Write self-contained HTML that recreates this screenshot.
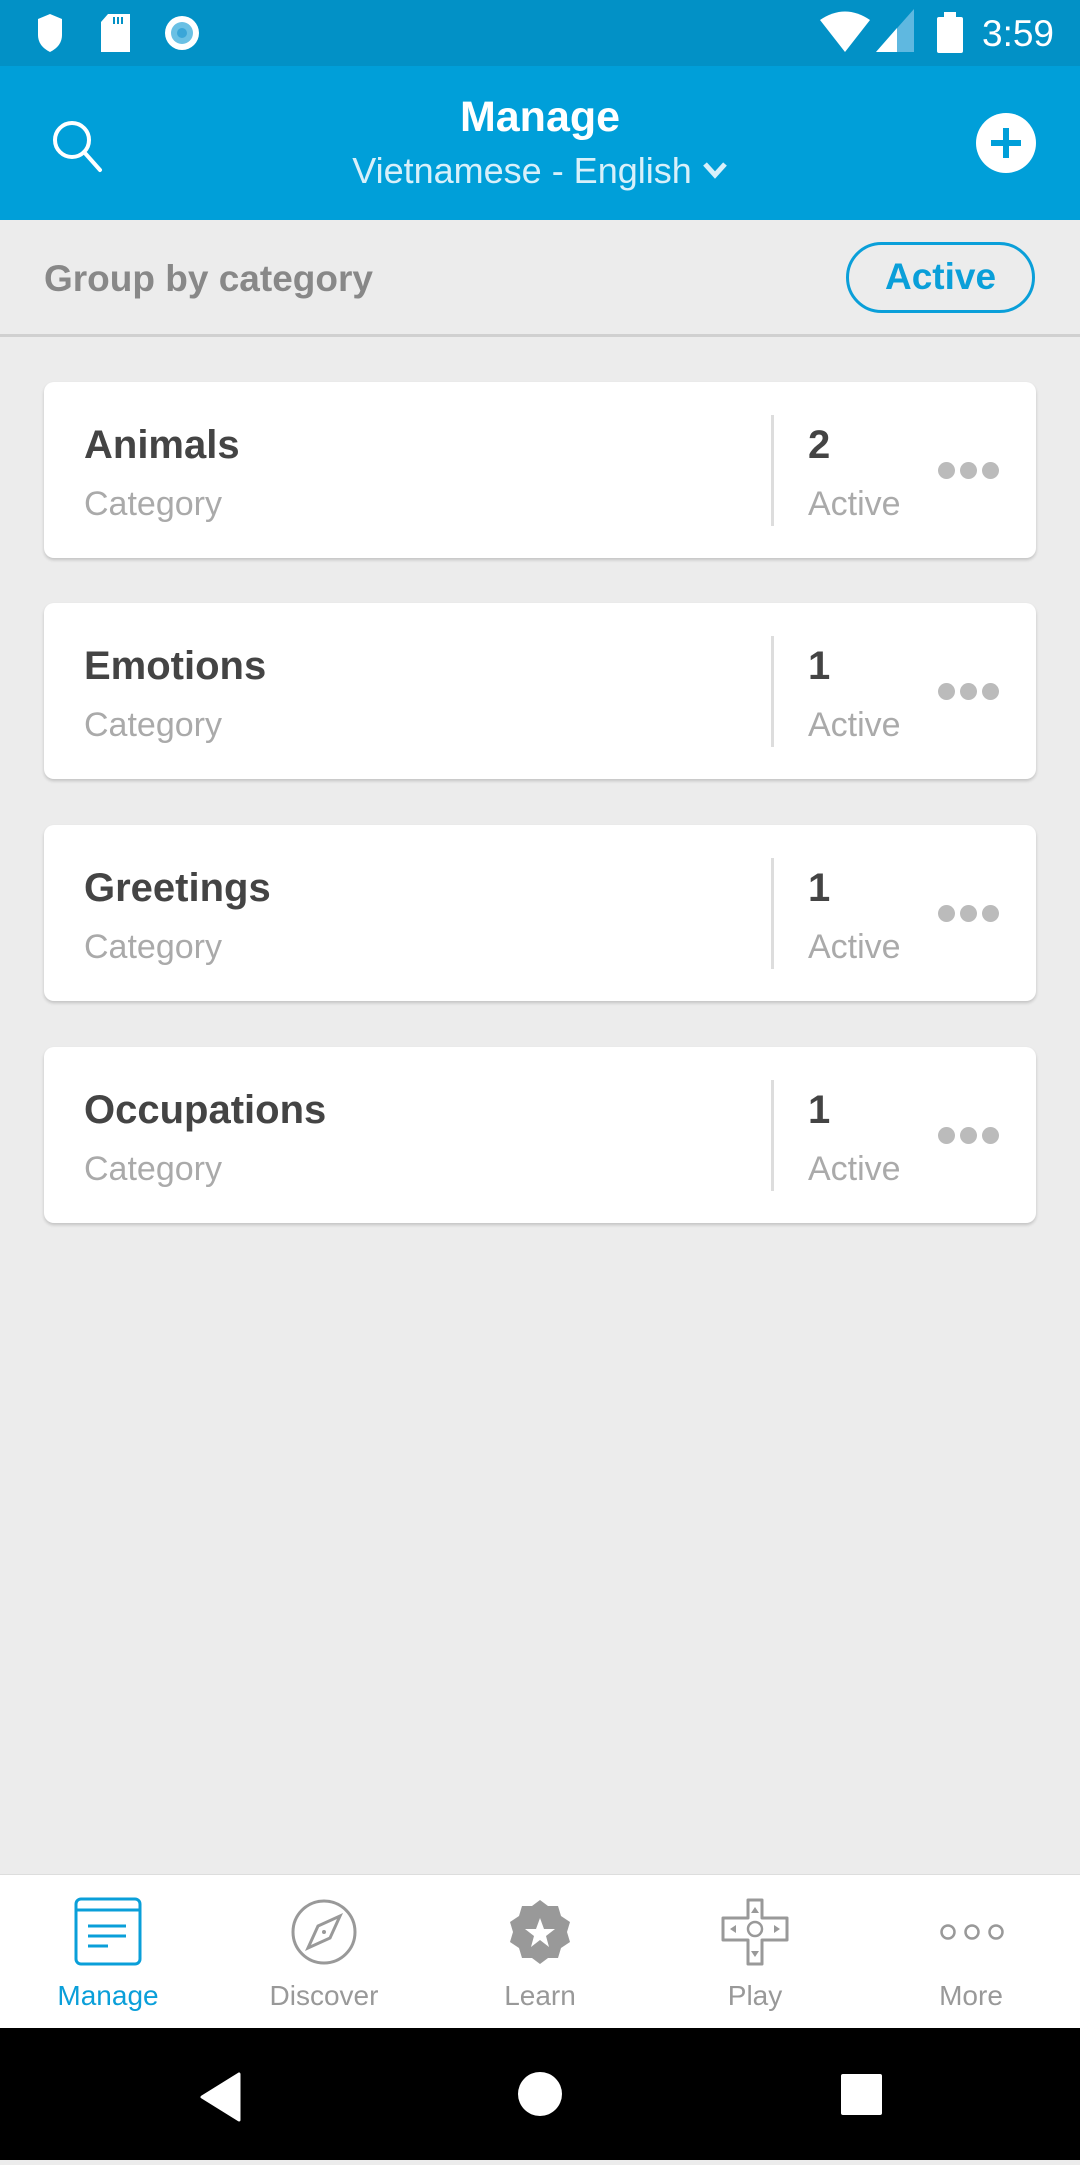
<!DOCTYPE html>
<html><head><meta charset="utf-8"><style>
*{margin:0;padding:0;box-sizing:border-box}
body{width:1080px;height:2160px;background:#ececec;font-family:"Liberation Sans",sans-serif;position:relative;overflow:hidden}
.abs{position:absolute}
#status{left:0;top:0;width:1080px;height:66px;background:#0291c6}
#bar{left:0;top:66px;width:1080px;height:154px;background:#009fd9}
.title{left:0;width:1080px;text-align:center;color:#fff}
#group{left:0;top:220px;width:1080px;height:117px;border-bottom:3px solid #d0d0d0}
.card{left:44px;width:992px;height:176px;background:#fff;border-radius:10px;box-shadow:0 2px 3px rgba(0,0,0,.18)}
.card .t{position:absolute;left:40px;top:41px;font-size:40px;font-weight:bold;color:#444}
.card .c{position:absolute;left:40px;top:103px;font-size:34px;color:#aaa}
.card .d{position:absolute;left:727px;top:33px;width:3px;height:111px;background:#ddd}
.card .n{position:absolute;left:764px;top:41px;font-size:40px;font-weight:bold;color:#444}
.card .a{position:absolute;left:764px;top:103px;font-size:34px;color:#aaa}
.card .dots{position:absolute;left:894px;top:80px}
.card .dots i{display:inline-block;width:17px;height:17px;border-radius:50%;background:#bbb;margin-right:5px}
#nav{left:0;top:1874px;width:1080px;height:154px;background:#fff;border-top:1px solid #ddd}
.lab{top:1980px;width:216px;text-align:center;font-size:28px;color:#999}
#sys{left:0;top:2028px;width:1080px;height:132px;background:#000}
</style></head><body>
<div id="status" class="abs">
<svg class="abs" style="left:0;top:0" width="1080" height="66">
<path d="M50 14 L62 19 L62 35 Q62 46 50 52 Q38 46 38 35 L38 19 Z" fill="#fff"/>
<path d="M108 14 L130 14 L130 52 L101 52 L101 22 Z" fill="#fff"/>
<rect x="113" y="17" width="2" height="7" fill="#0291c6"/><rect x="117" y="17" width="2" height="7" fill="#0291c6"/><rect x="121" y="17" width="2" height="7" fill="#0291c6"/>
<circle cx="182" cy="33" r="17" fill="#fff"/><circle cx="182" cy="33" r="11" fill="#6ac0e4"/><circle cx="182" cy="33" r="5" fill="#3aa6d8"/>
<path d="M820 20 Q845 3 870 20 L845 52 Z" fill="#fff"/>
<path d="M876 52 L914 9 L914 52 Z" fill="#5fb8e0"/><path d="M876 52 L897 28 L897 52 Z" fill="#fff"/>
<rect x="937" y="17" width="26" height="36" rx="2" fill="#fff"/><rect x="944" y="12" width="12" height="6" fill="#fff"/>
<text x="982" y="46" font-size="37" fill="#fff" font-family="Liberation Sans">3:59</text>
</svg></div>
<div id="bar" class="abs">
<div class="abs title" style="top:27px;font-size:43px;font-weight:bold">Manage</div>
<div class="abs title" style="top:84px;font-size:36px;color:#d8f0fa">Vietnamese - English <svg width="26" height="20" style="vertical-align:3px"><path d="M3 4 L13 15 L23 4" stroke="#d8f0fa" stroke-width="5" fill="none"/></svg></div>
<svg class="abs" style="left:48px;top:50px" width="60" height="60"><circle cx="24" cy="24" r="17" stroke="#fff" stroke-width="4" fill="none"/><path d="M36 36 L52 54" stroke="#fff" stroke-width="4" stroke-linecap="round"/></svg>
<svg class="abs" style="left:975px;top:45px" width="62" height="64"><circle cx="31" cy="32" r="30" fill="#fff"/><path d="M31 17 V47 M16 32 H46" stroke="#009fd9" stroke-width="6"/></svg>
</div>
<div id="group" class="abs">
<div class="abs" style="left:44px;top:38px;font-size:37px;font-weight:bold;color:#888">Group by category</div>
<div class="abs" style="left:846px;top:22px;width:189px;height:71px;border:3px solid #0a9fd9;border-radius:36px;text-align:center;line-height:63px;font-size:37px;font-weight:bold;color:#0a9fd9">Active</div>
</div>
<div class="abs card" style="top:382px"><div class="t">Animals</div><div class="c">Category</div><div class="d"></div><div class="n">2</div><div class="a">Active</div><div class="dots"><i></i><i></i><i></i></div></div>
<div class="abs card" style="top:603px"><div class="t">Emotions</div><div class="c">Category</div><div class="d"></div><div class="n">1</div><div class="a">Active</div><div class="dots"><i></i><i></i><i></i></div></div>
<div class="abs card" style="top:825px"><div class="t">Greetings</div><div class="c">Category</div><div class="d"></div><div class="n">1</div><div class="a">Active</div><div class="dots"><i></i><i></i><i></i></div></div>
<div class="abs card" style="top:1047px"><div class="t">Occupations</div><div class="c">Category</div><div class="d"></div><div class="n">1</div><div class="a">Active</div><div class="dots"><i></i><i></i><i></i></div></div>
<div id="nav" class="abs"></div>
<svg class="abs" style="left:0;top:1880px" width="1080" height="154">
<rect x="76" y="19" width="64" height="65" rx="5" stroke="#0a9fd9" stroke-width="3" fill="none"/><path d="M76 30 H140 M88 46 H126 M88 56 H126 M88 66 H108" stroke="#0a9fd9" stroke-width="3"/>
<circle cx="324" cy="52" r="31" stroke="#999" stroke-width="3" fill="none"/><path d="M340 36 L330 58 L308 68 L318 46 Z" stroke="#999" stroke-width="3" fill="none"/><circle cx="324" cy="52" r="2" fill="#999"/>
<path d="M540 20 L548 26 L558 26 L561 36 L570 42 L567 52 L570 62 L561 68 L558 78 L548 78 L540 84 L532 78 L522 78 L519 68 L510 62 L513 52 L510 42 L519 36 L522 26 L532 26 Z" fill="#999"/>
<path d="M540 38 L544 49 L555 49 L546 56 L549 67 L540 60 L531 67 L534 56 L525 49 L536 49 Z" fill="#fff"/>
<path d="M748 20 H762 V38 H787 V60 H762 V84 H748 V60 H723 V38 H748 Z" stroke="#999" stroke-width="3" fill="none" stroke-linejoin="round"/><circle cx="755" cy="49" r="7" stroke="#999" stroke-width="2.5" fill="none"/>
<path d="M755 27 L751 33 H759 Z M755 77 L751 71 H759 Z M730 49 L736 45 V53 Z M780 49 L774 45 V53 Z" fill="#999"/>
<circle cx="948" cy="52" r="6.5" stroke="#999" stroke-width="2.5" fill="none"/><circle cx="972" cy="52" r="6.5" stroke="#999" stroke-width="2.5" fill="none"/><circle cx="996" cy="52" r="6.5" stroke="#999" stroke-width="2.5" fill="none"/>
</svg>
<div class="abs lab" style="left:0;color:#0a9fd9">Manage</div>
<div class="abs lab" style="left:216px">Discover</div>
<div class="abs lab" style="left:432px">Learn</div>
<div class="abs lab" style="left:647px">Play</div>
<div class="abs lab" style="left:863px">More</div>
<div id="sys" class="abs"><svg width="1080" height="132">
<path d="M239 46 L239 92 L202 69 Z" fill="#fff" stroke="#fff" stroke-width="3" stroke-linejoin="round"/>
<circle cx="540" cy="66" r="22" fill="#fff"/>
<rect x="841" y="46" width="41" height="41" rx="2" fill="#fff"/>
</svg></div>
</body></html>
